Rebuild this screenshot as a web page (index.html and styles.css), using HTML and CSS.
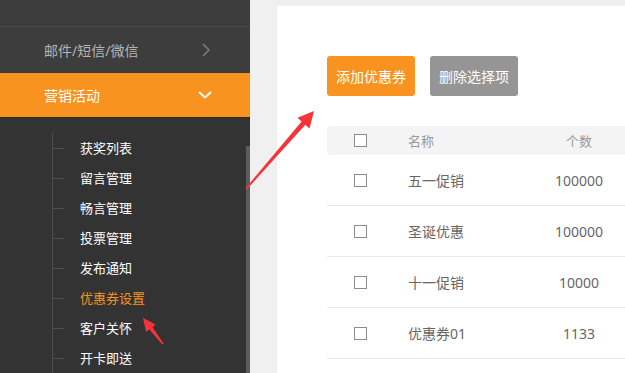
FILE: index.html
```html
<!DOCTYPE html>
<html lang="zh-CN">
  <head>
    <meta charset="UTF-8" />
    <meta name="viewport" content="width=device-width, initial-scale=1.0" />
    <title>优惠券设置</title>
    <link rel="stylesheet" href="styles.css">
  </head>
  <body>
    <aside class="sidebar">
      <div class="sidebar-top"></div>
      <div class="menu-item">
        <span>邮件/短信/微信</span>
        <svg class="chevron" width="12" height="14" viewBox="0 0 12 14">
          <polyline points="3,1 9,7 3,13" fill="none" stroke="#7a7a7a" stroke-width="1.6" />
        </svg>
      </div>
      <div class="menu-item active">
        <span>营销活动</span>
        <svg class="chevron" width="14" height="8" viewBox="0 0 14 8">
          <polyline points="1,1 7,6.5 13,1" fill="none" stroke="#fff" stroke-width="2" />
        </svg>
      </div>
      <div class="submenu-wrap">
        <ul class="submenu">
          <li>获奖列表</li>
          <li>留言管理</li>
          <li>畅言管理</li>
          <li>投票管理</li>
          <li>发布通知</li>
          <li class="current">优惠券设置</li>
          <li>客户关怀</li>
          <li>开卡即送</li>
        </ul>
        <div class="scrollbar"><div class="thumb"></div></div>
      </div>
    </aside>

    <main class="main">
      <div class="panel">
        <div class="toolbar">
          <button class="btn btn-primary">添加优惠券</button>
          <button class="btn btn-gray">删除选择项</button>
        </div>

        <div class="table">
          <div class="row head">
            <div class="cell-check"><span class="checkbox"></span></div>
            <div class="cell-name">名称</div>
            <div class="cell-count">个数</div>
            <div></div>
          </div>
          <div class="row">
            <div class="cell-check"><span class="checkbox"></span></div>
            <div class="cell-name">五一促销</div>
            <div class="cell-count">100000</div>
            <div></div>
          </div>
          <div class="row">
            <div class="cell-check"><span class="checkbox"></span></div>
            <div class="cell-name">圣诞优惠</div>
            <div class="cell-count">100000</div>
            <div></div>
          </div>
          <div class="row">
            <div class="cell-check"><span class="checkbox"></span></div>
            <div class="cell-name">十一促销</div>
            <div class="cell-count">10000</div>
            <div></div>
          </div>
          <div class="row">
            <div class="cell-check"><span class="checkbox"></span></div>
            <div class="cell-name">优惠券01</div>
            <div class="cell-count">1133</div>
            <div></div>
          </div>
        </div>
      </div>
    </main>

    <!-- annotation arrows drawn over the screenshot -->
    <svg class="annotations" width="625" height="373" viewBox="0 0 625 373">
      <polygon fill="#f4333a"
        points="245.3,188.4 301.6,121.5 297.5,117.8 314,111 309.5,128.4 305.4,124.7 246.7,189.6" />
      <polygon fill="#f4333a"
        points="163.6,343.5 152.5,327.1 155.7,324.6 143,318 146.1,332 149.3,329.5 162.4,344.5" />
    </svg>
  </body>
</html>
```

FILE: styles.css
```css
:root {
  --orange: #f7931e;
  --sidebar-bg: #333333;
  --sidebar-top: #3d3d3d;
  --border-color: #e8e8e8;
}

* {
  margin: 0;
  padding: 0;
  box-sizing: border-box;
}

body {
  font-family: "Noto Sans", "Noto Sans CJK SC", sans-serif;
  background-color: #f0f0f0;
  display: flex;
  height: 100vh;
  overflow: hidden;
}

/* sidebar */
.sidebar {
  width: 250px;
  flex-shrink: 0;
  background-color: var(--sidebar-bg);
  display: flex;
  flex-direction: column;
}

.sidebar-top {
  height: 27px;
  background-color: var(--sidebar-top);
  border-bottom: 1px solid #4a4a4a;
}

.menu-item {
  height: 46px;
  display: flex;
  align-items: center;
  justify-content: space-between;
  padding: 0 38px 0 44px;
  background-color: var(--sidebar-top);
  color: #b4b4b4;
  font-size: 14px;
}

.menu-item.active {
  height: 45px;
  background-color: var(--orange);
  color: #fff;
  border-bottom: 1px solid #2a2a2a;
}

.menu-item .chevron {
  display: block;
}

.submenu-wrap {
  flex-grow: 1;
  display: flex;
}

.submenu {
  list-style: none;
  flex-grow: 1;
  margin: 15px 0 0 52px;
  border-left: 1px solid #4e4e4e;
}

.submenu li {
  height: 30px;
  line-height: 30px;
  padding-left: 27px;
  color: #fff;
  font-size: 13px;
  background: linear-gradient(#4e4e4e, #4e4e4e) no-repeat 0 50% / 11px 1px;
}

.submenu li.current {
  color: var(--orange);
}

.scrollbar {
  width: 4px;
  padding-top: 28px;
}

.scrollbar .thumb {
  height: 100%;
  background-color: #5c5c5c;
}

/* main area */
.main {
  flex-grow: 1;
  display: flex;
  padding: 6px 0 0 27px;
  min-width: 0;
}

.panel {
  flex-grow: 1;
  background-color: #fff;
  padding: 50px 0 0 50px;
  overflow: hidden;
}

.toolbar {
  display: flex;
  gap: 15px;
}

.btn {
  width: 88px;
  height: 40px;
  border: none;
  border-radius: 3px;
  color: #fff;
  font-family: inherit;
  font-size: 14px;
  cursor: pointer;
}

.btn-primary {
  background-color: var(--orange);
}

.btn-gray {
  background-color: #959595;
}

.table {
  width: 420px;
  margin-top: 30px;
}

.row {
  display: grid;
  grid-template-columns: 81px 120px 102px 1fr;
  align-items: center;
  height: 51px;
  border-bottom: 1px solid var(--border-color);
  color: #666;
  font-size: 14px;
}

.row.head {
  height: 29px;
  border-bottom: none;
  background-color: #f4f4f4;
  border-radius: 4px 0 0 4px;
  color: #999;
  font-size: 13px;
}

.cell-check {
  padding-left: 27px;
  display: flex;
}

.checkbox {
  width: 13px;
  height: 13px;
  border: 1px solid #8c8c8c;
  background-color: #fff;
}

.cell-count {
  text-align: center;
}

.annotations {
  position: fixed;
  top: 0;
  left: 0;
  pointer-events: none;
}
```
